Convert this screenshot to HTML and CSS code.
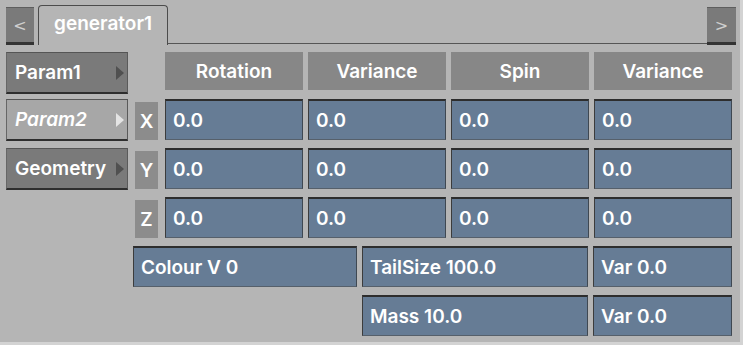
FILE: index.html
```html
<!DOCTYPE html>
<html lang="en">
<head>
  <meta charset="UTF-8">
  <title>generator1</title>
  <link rel="stylesheet" href="styles.css">
</head>
<body>

  <div class="panel">
    <div class="tabbar">
      <button class="nav">&lt;</button>
      <div class="tab">generator1</div>
      <div class="tabline"></div>
      <button class="nav nav-right">&gt;</button>
    </div>

    <div class="editor">
      <!-- header row -->
      <div class="menu-btn">Param1<span class="arrow"></span></div>
      <div class="blank"></div>
      <div class="head">Rotation</div>
      <div class="head">Variance</div>
      <div class="head">Spin</div>
      <div class="head">Variance</div>

      <!-- X -->
      <div class="menu-btn active"><i>Param2</i><span class="arrow"></span></div>
      <div class="axis">X</div>
      <div class="field">0.0</div>
      <div class="field">0.0</div>
      <div class="field">0.0</div>
      <div class="field">0.0</div>

      <!-- Y -->
      <div class="menu-btn">Geometry<span class="arrow"></span></div>
      <div class="axis">Y</div>
      <div class="field">0.0</div>
      <div class="field">0.0</div>
      <div class="field">0.0</div>
      <div class="field">0.0</div>

      <!-- Z -->
      <div class="blank"></div>
      <div class="axis">Z</div>
      <div class="field">0.0</div>
      <div class="field">0.0</div>
      <div class="field">0.0</div>
      <div class="field">0.0</div>

      <div class="blank"></div>
      <div class="extra">
        <div class="field w-first">Colour V 0</div>
        <div class="field w-second">TailSize 100.0</div>
        <div class="field w-last">Var 0.0</div>
      </div>

      <div class="blank"></div>
      <div class="extra">
        <div class="w-first"></div>
        <div class="field w-second">Mass 10.0</div>
        <div class="field w-last">Var 0.0</div>
      </div>
    </div>
  </div>

</body>
</html>
```

FILE: styles.css
```css
body {
  margin: 0;
  background-color: #d3d3d3;
  font-family: Inter, "Open Sans", sans-serif;
  font-weight: 600;
  font-size: 19px;
  color: #fff;
}
.panel {
  width: 740px;
  height: 342px;
  background: #b5b5b5;
  overflow: hidden;
}

/* tab bar */
.tabbar {
  display: flex;
  align-items: flex-end;
  height: 45px;
  padding: 0 4px 0 6px;
  box-sizing: border-box;
}
.nav {
  width: 28px;
  height: 38px;
  padding: 0;
  background: #7a7a7a;
  border: none;
  border-top: 1px solid #5e5e5e;
  border-bottom: 3px solid #343434;
  color: #cfcfcf;
  font-family: "DejaVu Sans", sans-serif;
  font-size: 16px;
  font-weight: normal;
  box-sizing: border-box;
}
.nav-right {
  width: 29px;
}
.tab {
  width: 130px;
  height: 40px;
  margin-left: 4px;
  border: 1px solid #4c4c4c;
  border-bottom: none;
  border-radius: 4px 4px 0 0;
  box-sizing: border-box;
  display: flex;
  align-items: center;
  justify-content: center;
  padding-bottom: 4px;
}
.tabline {
  flex: 1;
  margin-bottom: 1px;
  border-bottom: 1px solid #555;
}

/* main grid */
.editor {
  display: grid;
  grid-template-columns: 122px 27px repeat(4, 138px);
  grid-template-rows: 39px repeat(5, 41px);
  column-gap: 5px;
  row-gap: 8px;
  padding: 7px 0 0 6px;
}
.menu-btn {
  height: 42px;
  align-self: start;
  background: #7a7a7a;
  border-top: 1px solid #555;
  border-bottom: 2px solid #2e2e2e;
  border-left: 1px solid #666;
  border-right: 1px solid #5a5a5a;
  box-sizing: border-box;
  display: flex;
  align-items: center;
  justify-content: space-between;
  padding: 0 3px 0 8px;
}
.menu-btn.active {
  background: #a7a7a7;
}
.menu-btn i {
  font-style: italic;
}
.arrow {
  width: 0;
  height: 0;
  border-left: 8px solid #505050;
  border-top: 7px solid transparent;
  border-bottom: 7px solid transparent;
}
.menu-btn.active .arrow {
  border-left-color: #e4e4e4;
}
.head {
  height: 38px;
  background: #878787;
  display: flex;
  align-items: center;
  justify-content: center;
}
.axis {
  width: 23px;
  margin: 3px 0 0 2px;
  background: #8c8c8c;
  display: flex;
  align-items: center;
  justify-content: center;
}
.field {
  background: #667c95;
  border-top: 2px solid #2d2d2d;
  border-left: 1px solid #3c3c3c;
  border-right: 1px solid #3f4852;
  border-bottom: 1px solid #56606b;
  box-sizing: border-box;
  display: flex;
  align-items: center;
  padding-left: 7px;
}
.extra {
  grid-column: 2 / -1;
  display: flex;
  gap: 5px;
}
.w-first {
  width: 224px;
}
.w-second {
  width: 226px;
}
.w-last {
  flex: 1;
}
```
